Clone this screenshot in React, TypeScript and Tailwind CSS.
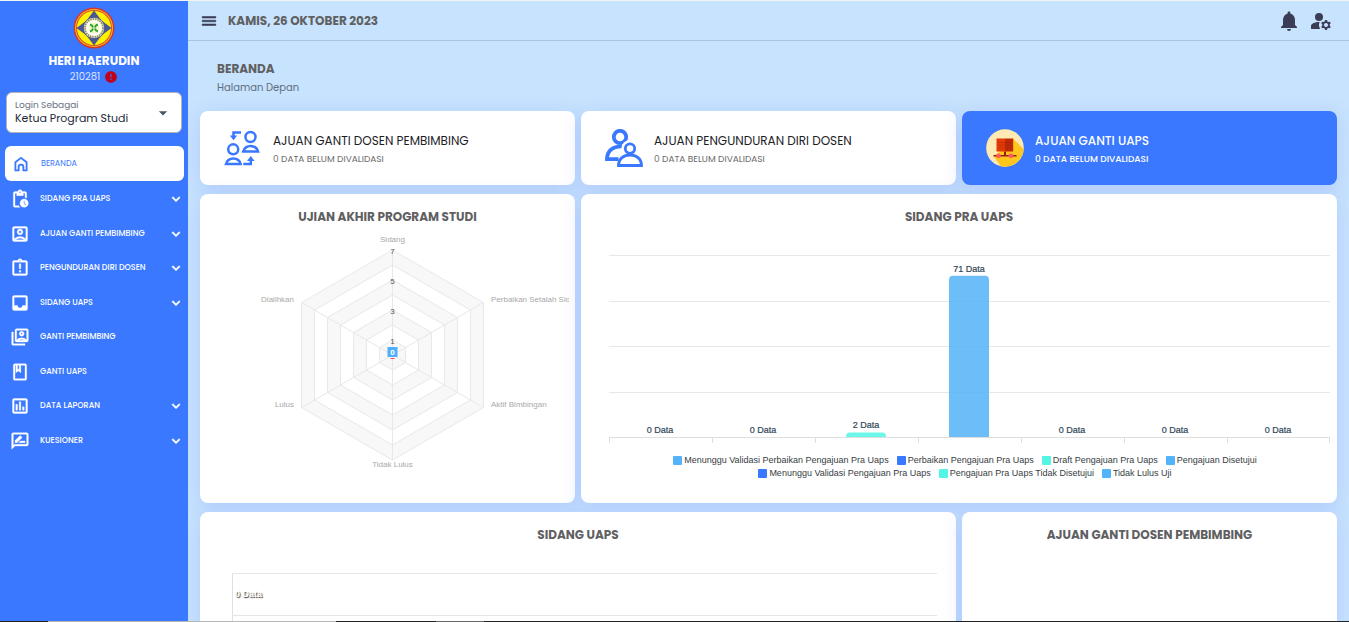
import type { ReactNode } from 'react';
import type { IconType } from 'react-icons';
import {
  MdArrowDropDown,
  MdError,
  MdInbox,
  MdKeyboardArrowDown,
  MdManageAccounts,
  MdMenu,
  MdNotifications,
  MdOutlineAccountBox,
  MdOutlineAssessment,
  MdOutlineAssignmentLate,
  MdOutlineBook,
  MdOutlinePendingActions,
  MdOutlineRateReview,
  MdOutlineSwitchAccount,
} from 'react-icons/md';

const menus: { label: string; icon: IconType; expandable: boolean }[] = [
  { label: 'SIDANG PRA UAPS', icon: MdOutlinePendingActions, expandable: true },
  { label: 'AJUAN GANTI PEMBIMBING', icon: MdOutlineAccountBox, expandable: true },
  { label: 'PENGUNDURAN DIRI DOSEN', icon: MdOutlineAssignmentLate, expandable: true },
  { label: 'SIDANG UAPS', icon: MdInbox, expandable: true },
  { label: 'GANTI PEMBIMBING', icon: MdOutlineSwitchAccount, expandable: false },
  { label: 'GANTI UAPS', icon: MdOutlineBook, expandable: false },
  { label: 'DATA LAPORAN', icon: MdOutlineAssessment, expandable: true },
  { label: 'KUESIONER', icon: MdOutlineRateReview, expandable: true },
];

const praUaps = [
  { label: 'Menunggu Validasi Perbaikan Pengajuan Pra Uaps', value: 0, color: '#54b2f8' },
  { label: 'Perbaikan Pengajuan Pra Uaps', value: 0, color: '#3a78ff' },
  { label: 'Draft Pengajuan Pra Uaps', value: 2, color: '#53f6e6' },
  { label: 'Pengajuan Disetujui', value: 71, color: '#54b2f8' },
  { label: 'Menunggu Validasi Pengajuan Pra Uaps', value: 0, color: '#3a78ff' },
  { label: 'Pengajuan Pra Uaps Tidak Disetujui', value: 0, color: '#53f6e6' },
  { label: 'Tidak Lulus Uji', value: 0, color: '#54b2f8' },
];

function CampusLogo() {
  return (
    <svg viewBox="0 0 42 42" className="size-[42px]" aria-hidden="true">
      <circle cx="21" cy="21" r="20.5" fill="#d9342b" />
      <circle cx="21" cy="21" r="19" fill="#f5b921" />
      <circle cx="21" cy="21" r="18" fill="#d9552b" />
      <circle cx="21" cy="21" r="17" fill="#fff200" />
      <path d="M21 3.5 L27 11.5 L30.5 15 L38.5 21 L30.5 27 L27 30.5 L21 38.5 L15 30.5 L11.5 27 L3.5 21 L11.5 15 L15 11.5Z" fill="#4b5790" />
      <circle cx="21" cy="21" r="10.2" fill="#f5ee9a" />
      <circle cx="21" cy="21" r="9" fill="none" stroke="#7d7f96" strokeWidth="1.6" strokeDasharray="1.4 1" />
      <circle cx="21" cy="21" r="7.8" fill="#fff" />
      <circle cx="21" cy="21" r="5.5" fill="#f6f7c0" />
      <path d="M17 17.5 Q19.5 18 20 20.5 M25 17.5 Q22.5 18 22 20.5 M17 24.5 Q19.5 24 20 21.5 M25 24.5 Q22.5 24 22 21.5" fill="none" stroke="#2fa336" strokeWidth="1.9" />
    </svg>
  );
}

function HomeIcon() {
  return (
    <svg viewBox="0 0 16 16" className="size-4 shrink-0" fill="none" stroke="currentColor" strokeWidth="1.8" aria-hidden="true">
      <path d="M2.4 6.2 L8 1.8 L13.6 6.2 V14.4 H10.4 V11 A2.4 2.4 0 0 0 5.6 11 V14.4 H2.4Z" />
    </svg>
  );
}

function SwapPeopleIcon() {
  return (
    <svg viewBox="0 0 38 38" className="size-[38px] shrink-0" fill="none" stroke="#3a78ff" strokeWidth="2.5" aria-hidden="true">
      <circle cx="26.5" cy="8" r="5" />
      <circle cx="9.2" cy="20.3" r="5" />
      <path d="M19.3 22.4 A7.7 7.7 0 0 1 34 22.4Z" />
      <path d="M2 35 A7.7 7.7 0 0 1 16.7 35Z" />
      <path d="M17 3.4 H9.5 V7.5" />
      <path d="M5.8 6.5 H13.2 L9.5 11.3Z" fill="#3a78ff" stroke="none" />
      <path d="M19.3 35 H26.8 V31" />
      <path d="M23 32 H30.6 L26.8 27Z" fill="#3a78ff" stroke="none" />
    </svg>
  );
}

function PeopleIcon() {
  return (
    <svg viewBox="0 0 38 38" className="size-[38px] shrink-0" fill="none" stroke="#3a78ff" strokeWidth="3.8" aria-hidden="true">
      <circle cx="15" cy="8" r="6.2" />
      <path d="M13.5 30.2 H2 C2 22 8 17 17 17.3" />
      <circle cx="25" cy="19.6" r="6.8" fill="#fff" stroke="#fff" />
      <circle cx="25" cy="19.6" r="4.7" fill="#fff" strokeWidth="2.8" />
      <path d="M13.6 36.4 C13.6 29.5 18.8 26 25 26 S36.4 29.5 36.4 36.4Z" fill="#fff" strokeWidth="3" />
    </svg>
  );
}

function ServerIcon() {
  return (
    <svg viewBox="0 0 38 38" className="size-[38px] shrink-0" aria-hidden="true">
      <circle cx="19" cy="19" r="18.8" fill="#ffeab4" />
      <path d="M27 9.5 L37.6 20 A18.8 18.8 0 0 1 15 37.4 L8 27.8Z" fill="#ffc61e" />
      <path d="M10.5 9.5 H19 V22.5 H10.5Z" fill="#e33b05" />
      <path d="M19 9.5 H27.2 V22.5 H19Z" fill="#bd2a05" />
      <path d="M12.5 13.5 H25 M12.5 16.2 H25 M12.5 19 H25" stroke="#8f1e0a" strokeWidth="0.6" opacity="0.5" />
      <path d="M18 22.5 H20 V26 H30.5 V27.6 H7.5 V26 H18Z" fill="#9b1c12" />
      <circle cx="12.5" cy="26.8" r="2.4" fill="#fb5c62" />
      <circle cx="25" cy="26.8" r="2.4" fill="#fb5c62" />
    </svg>
  );
}

function Sidebar() {
  return (
    <aside className="flex w-47 shrink-0 flex-col bg-[#3a78ff] text-white">
      <div className="flex flex-col items-center pt-1.5">
        <CampusLogo />
        <p className="mt-1 text-[12px] leading-4 font-bold">HERI HAERUDIN</p>
        <p className="flex items-center gap-1 text-[10px] leading-4 text-white/80">
          210281 <MdError className="size-3.5 text-[#c40018]" />
        </p>
      </div>

      <div className="relative mx-1.5 mt-[7px] h-[41px] rounded-md border border-[#b4b4b4] bg-white">
        <label htmlFor="role" className="absolute top-1.5 left-2 text-[9px] leading-3 text-gray-500">
          Login Sebagai
        </label>
        <select id="role" className="size-full appearance-none bg-transparent pt-3 pl-2 text-[11px] text-gray-800">
          <option>Ketua Program Studi</option>
        </select>
        <MdArrowDropDown className="pointer-events-none absolute top-2.5 right-2 size-5 text-gray-600" />
      </div>

      <nav className="mt-[13px]">
        <a href="#beranda" className="mr-1 ml-[5px] flex h-[35px] items-center gap-3 rounded-md bg-white pl-2 text-[8px] text-[#3a78ff]">
          <HomeIcon />
          BERANDA
        </a>
        <ul className="mt-px grid h-[276px] auto-rows-fr">
          {menus.map(({ label, icon: Icon, expandable }) => (
            <li key={label} className="flex">
              <a href="#menu" className="flex flex-1 items-center gap-2.5 pr-1 pl-2.5 text-[8px] font-medium">
                <Icon className="size-5 shrink-0 stroke-current stroke-[0.4px] [&>[fill=none]]:stroke-none" />
                <span className="flex-1">{label}</span>
                {expandable && <MdKeyboardArrowDown className="size-4 stroke-current stroke-1 [&>[fill=none]]:stroke-none" />}
              </a>
            </li>
          ))}
        </ul>
      </nav>
    </aside>
  );
}

function Topbar() {
  return (
    <header className="flex h-10 shrink-0 items-center border-b border-[#a9c5e3] pr-4 pl-3 text-[#3b3c55]">
      <button type="button" aria-label="Menu">
        <MdMenu className="size-[18px] stroke-current stroke-[0.8px] [&>[fill=none]]:stroke-none" />
      </button>
      <p className="ml-2.5 flex-1 text-[12px] font-bold text-[#5f6062]">KAMIS, 26 OKTOBER 2023</p>
      <button type="button" aria-label="Notifikasi" className="mr-2">
        <MdNotifications className="size-6" />
      </button>
      <button type="button" aria-label="Akun">
        <MdManageAccounts className="size-6" />
      </button>
    </header>
  );
}

function StatCard({ icon, title, active }: { icon: ReactNode; title: string; active?: boolean }) {
  return (
    <section
      className={
        active
          ? 'flex items-center gap-[11px] rounded-lg bg-[#3a78ff] px-6 text-white shadow-[0_4px_20px_rgba(90,110,255,0.2)]'
          : 'flex items-center gap-[11px] rounded-lg bg-white px-6 text-[#1d1d1f] shadow-[0_4px_20px_rgba(90,110,255,0.2)]'
      }
    >
      {icon}
      <div className="pt-0.5">
        <h2 className={active ? 'text-[12px] leading-5 font-medium' : 'text-[12px] leading-5'}>{title}</h2>
        <p className={active ? 'text-[9px] leading-4 font-medium' : 'text-[9px] leading-4 text-[#6b6b6b]'}>
          0 DATA BELUM DIVALIDASI
        </p>
      </div>
    </section>
  );
}

function Card({ title, wide, children }: { title: string; wide?: boolean; children?: ReactNode }) {
  return (
    <section
      className={
        wide
          ? 'col-span-2 rounded-lg bg-white px-1.5 pt-3.5 shadow-[0_4px_20px_rgba(90,110,255,0.2)]'
          : 'rounded-lg bg-white px-1.5 pt-3.5 shadow-[0_4px_20px_rgba(90,110,255,0.2)]'
      }
    >
      <h2 className="text-center text-[12px] leading-[18px] font-bold text-[#5f6062]">{title}</h2>
      {children}
    </section>
  );
}

const CX = 186.5;
const CY = 129;

function hexagon(r: number) {
  return [0, 1, 2, 3, 4, 5]
    .map((i) => {
      const a = (Math.PI / 3) * i - Math.PI / 2;
      return `${CX + r * Math.cos(a)},${CY + r * Math.sin(a)}`;
    })
    .join(' ');
}

function RadarChart() {
  return (
    <svg viewBox="0 0 363 265" className="w-full overflow-hidden font-['Liberation_Sans',Arial,sans-serif] text-[8px]">
      {[7, 6, 5, 4, 3, 2, 1].map((level) => (
        <polygon key={level} points={hexagon(level * 15)} fill={level % 2 ? '#f8f8f8' : '#fff'} stroke="#e8e8e8" />
      ))}
      {[0, 1, 2, 3, 4, 5].map((i) => {
        const a = (Math.PI / 3) * i - Math.PI / 2;
        return <line key={i} x1={CX} y1={CY} x2={CX + 105 * Math.cos(a)} y2={CY + 105 * Math.sin(a)} stroke="#e8e8e8" />;
      })}
      <g fill="#a8a8a8">
        <text x={CX} y="16" textAnchor="middle">Sidang</text>
        <text x="285" y="76">Perbaikan Setalah Sidang</text>
        <text x="285" y="181">Aktif Bimbingan</text>
        <text x={CX} y="241" textAnchor="middle">Tidak Lulus</text>
        <text x="88" y="181" textAnchor="end">Lulus</text>
        <text x="88" y="76" textAnchor="end">Dialihkan</text>
      </g>
      <g fill="#555">
        {[7, 5, 3, 1].map((n) => (
          <text key={n} x={CX} y={CY + 4 - n * 15} textAnchor="middle">{n}</text>
        ))}
      </g>
      <rect x={CX - 2} y={CY + 3} width="4" height="1" fill="#ff4560" />
      <rect x={CX - 5} y={CY - 8} width="10" height="10" fill="#4fb0f9" />
      <text x={CX} y={CY} textAnchor="middle" fill="#fff" className="font-bold">0</text>
    </svg>
  );
}

function BarChart() {
  return (
    <>
      <svg viewBox="0 0 744 222" className="w-full font-['Liberation_Sans',Arial,sans-serif] text-[9px] font-medium">
        {[29, 75, 120, 166].map((y) => (
          <rect key={y} x="22" y={y} width="721" height="1" fill="#e8e8e8" />
        ))}
        {praUaps.map((item, i) => {
          const height = item.value === 0 ? 0 : Math.max(4, item.value * 2.27);
          const x = 53 + i * 103;
          const top = 211 - height;
          return (
            <g key={item.label}>
              {height > 0 && (
                <path
                  d={`M${x} 211 V${top + 4} Q${x} ${top} ${x + 4} ${top} H${x + 36} Q${x + 40} ${top} ${x + 40} ${top + 4} V211Z`}
                  fill={item.color}
                  fillOpacity="0.85"
                />
              )}
              <text x={x + 20} y={top - 4} textAnchor="middle" fill="#304758" stroke="#304758" strokeWidth="0.2">
                {item.value} Data
              </text>
            </g>
          );
        })}
        <rect x="22" y="211" width="721" height="1" fill="#dedede" />
        {[0, 1, 2, 3, 4, 5, 6, 7].map((i) => (
          <rect key={i} x={22 + i * 103 - (i === 7 ? 1 : 0)} y="212" width="1" height="5" fill="#dedede" />
        ))}
      </svg>
      <ul className="mx-auto mt-1.5 flex max-w-[640px] flex-wrap justify-center gap-x-2 pb-[23px] pl-3 font-['Liberation_Sans',Arial,sans-serif] text-[9px] leading-[13px] text-[#373d3f]">
        {praUaps.map((item) => (
          <li key={item.label} className="flex items-center gap-0.5">
            <span className="size-[9px] rounded-[1px]" style={{ background: item.color }} />
            {item.label}
          </li>
        ))}
      </ul>
    </>
  );
}

function HorizontalChart() {
  return (
    <svg viewBox="0 0 744 260" className="w-full font-['Liberation_Sans',Arial,sans-serif] text-[9px]">
      <rect x="26" y="29" width="1" height="211" fill="#e0e0e0" />
      {[29, 71, 113, 155, 197, 239].map((y) => (
        <rect key={y} x="26" y={y} width="705" height="1" fill="#e6e6e6" />
      ))}
      <text x="29" y="53" fill="#fff" className="font-bold [text-shadow:1px_1px_1px_#444]">0 Data</text>
    </svg>
  );
}

export default function App() {
  return (
    <div className="flex h-screen flex-col overflow-hidden bg-[#c7e3fd] font-['Poppins','Inter',sans-serif]">
      <div className="h-px shrink-0 bg-[#f1f3f4]" />
      <div className="flex min-h-0 flex-1">
        <Sidebar />
        <div className="flex min-w-0 flex-1 flex-col">
          <Topbar />
          <main className="min-h-0 flex-1 overflow-y-auto px-3 [scrollbar-width:none]">
            <div className="px-4 pt-4 pb-4">
              <h1 className="pl-px text-[12px] leading-6 font-bold text-[#5f6062]">BERANDA</h1>
              <p className="pl-px text-[10px] leading-3.5 text-[#5f6f80]">Halaman Depan</p>
            </div>

            <div className="grid grid-cols-3 grid-rows-[74px] gap-x-1.5 gap-y-[9px]">
              <StatCard icon={<SwapPeopleIcon />} title="AJUAN GANTI DOSEN PEMBIMBING" />
              <StatCard icon={<PeopleIcon />} title="AJUAN PENGUNDURAN DIRI DOSEN" />
              <StatCard icon={<ServerIcon />} title="AJUAN GANTI UAPS" active />

              <Card title="UJIAN AKHIR PROGRAM STUDI">
                <RadarChart />
              </Card>
              <Card title="SIDANG PRA UAPS" wide>
                <BarChart />
              </Card>

              <Card title="SIDANG UAPS" wide>
                <HorizontalChart />
              </Card>
              <Card title="AJUAN GANTI DOSEN PEMBIMBING" />
            </div>
          </main>
        </div>
      </div>
      <div className="flex h-px shrink-0 bg-[#222]">
        <div className="w-12" />
        <div className="w-72 bg-[#b8b8b8]" />
        <div className="w-25" />
        <div className="w-12 bg-[#666]" />
      </div>
    </div>
  );
}
